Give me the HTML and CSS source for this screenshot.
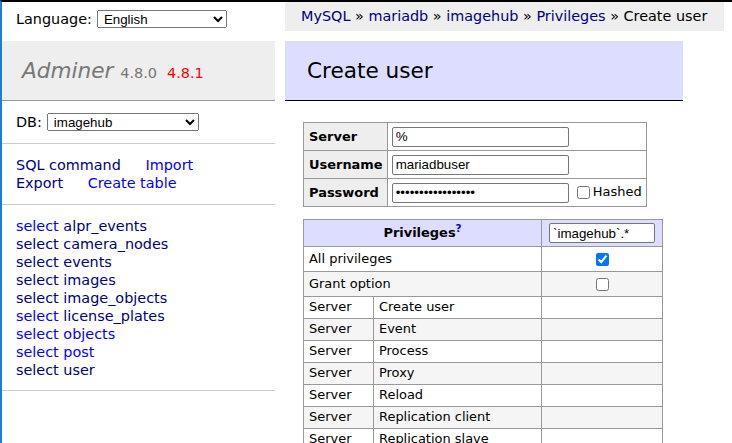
FILE: index.html
```html
<!DOCTYPE html>
<html lang="en">
<head>
<meta charset="utf-8">
<title>Create user - Adminer</title>
<link rel="stylesheet" href="styles.css">
</head>
<body>
<div class="page">
  <aside class="menu">
    <form class="lang">
      <span>Language:</span>
      <select class="lang-select"><option>English</option></select>
    </form>
    <h1 class="brand"><a class="brand-name" href="#">Adminer</a> <span class="version">4.8.0</span> <a class="new-version" href="#">4.8.1</a></h1>
    <form class="dbs">
      <span>DB:</span>
      <select class="db-select"><option>imagehub</option></select>
    </form>
    <p class="links">
      <a class="visited gap" href="#">SQL command</a> <a class="gap" href="#">Import</a><br>
      <a class="visited gap" href="#">Export</a> <a class="gap" href="#">Create table</a>
    </p>
    <ul class="tables">
      <li><a href="#">select</a> <a class="visited" href="#">alpr_events</a></li>
      <li><a class="visited" href="#">select</a> <a class="visited" href="#">camera_nodes</a></li>
      <li><a class="visited" href="#">select</a> <a class="visited" href="#">events</a></li>
      <li><a class="visited" href="#">select</a> <a class="visited" href="#">images</a></li>
      <li><a class="visited" href="#">select</a> <a class="visited" href="#">image_objects</a></li>
      <li><a href="#">select</a> <a class="visited" href="#">license_plates</a></li>
      <li><a href="#">select</a> <a href="#">objects</a></li>
      <li><a href="#">select</a> <a href="#">post</a></li>
      <li><a class="visited" href="#">select</a> <a class="visited" href="#">user</a></li>
    </ul>
  </aside>

  <main class="content">
    <nav class="breadcrumb">
      <a href="#">MySQL</a> » <a href="#">mariadb</a> » <a href="#">imagehub</a> » <a href="#">Privileges</a> » Create user
    </nav>
    <h2 class="title">Create user</h2>

    <form class="user-form">
      <table class="grid user-table">
        <tbody>
          <tr><th>Server</th><td><input class="text-in" type="text" value="%"></td></tr>
          <tr><th>Username</th><td><input class="text-in" type="text" value="mariadbuser"></td></tr>
          <tr><th>Password</th><td><input class="text-in" type="password" value="xxxxxxxxxxxxxxxxx"> <label class="hashed"><input class="check" type="checkbox">Hashed</label></td></tr>
        </tbody>
      </table>

      <table class="grid priv-table">
        <colgroup><col class="c1"><col class="c2"><col class="c3"></colgroup>
        <thead>
          <tr><th colspan="2" class="priv-head">Privileges<sup><a class="help" href="#">?</a></sup></th><td class="scope-cell"><input class="scope-in" type="text" value="`imagehub`.*"></td></tr>
        </thead>
        <tbody>
          <tr class="check-row"><td colspan="2">All privileges</td><td class="center"><input class="check-block" type="checkbox" checked></td></tr>
          <tr class="check-row"><td colspan="2">Grant option</td><td class="center"><input class="check-block" type="checkbox"></td></tr>
          <tr><td>Server</td><td>Create user</td><td></td></tr>
          <tr><td>Server</td><td>Event</td><td></td></tr>
          <tr><td>Server</td><td>Process</td><td></td></tr>
          <tr><td>Server</td><td>Proxy</td><td></td></tr>
          <tr><td>Server</td><td>Reload</td><td></td></tr>
          <tr><td>Server</td><td>Replication client</td><td></td></tr>
          <tr><td>Server</td><td>Replication slave</td><td></td></tr>
        </tbody>
      </table>
    </form>
  </main>
</div>
</body>
</html>
```

FILE: styles.css
```css
html, body {
  margin: 0;
  padding: 0;
}

body {
  font: 14.4px/18px "DejaVu Sans", Verdana, sans-serif;
  color: #000;
  background: #fff;
  border-top: 2px solid #000;
  border-left: 2px solid #1a7fd6;
  min-height: 100vh;
  box-sizing: border-box;
  overflow: hidden;
}

a {
  color: #00f;
  text-decoration: none;
}

a.visited {
  color: #000080;
}

.page {
  display: grid;
  grid-template-columns: 273px 1fr;
  column-gap: 10px;
  align-items: start;
}

/* ---------- sidebar ---------- */
.lang {
  display: flex;
  align-items: flex-start;
  gap: 5px;
  height: 39px;
  box-sizing: border-box;
  padding: 8px 14px 0;
  margin: 0;
}

.lang span, .dbs span {
  line-height: 18px;
}

select {
  font: 13.33px "Liberation Sans", Arial, sans-serif;
  color: #000;
  height: 18px;
  box-sizing: border-box;
  padding: 0 2px;
  margin: 0;
}

.lang-select {
  width: 130px;
}

.db-select {
  width: 152px;
}

.brand {
  margin: 0;
  padding: 16px 20px;
  height: 60px;
  box-sizing: border-box;
  line-height: 27px;
  font-size: 21.6px;
  font-weight: normal;
  font-style: italic;
  background: #eee;
  border-bottom: 1px solid #999;
  color: #777;
  white-space: nowrap;
  overflow: hidden;
}

.brand-name {
  color: #777;
}

.version {
  font-size: 67%;
  line-height: 10px;
  font-style: normal;
  color: #777;
}

.new-version {
  font-size: 67%;
  line-height: 10px;
  font-style: normal;
  color: #f00;
  margin-left: 3px;
}

.dbs {
  display: flex;
  align-items: center;
  gap: 5px;
  margin: 0;
  padding: 12px 14px;
  border-bottom: 1px solid #ccc;
}

.links {
  margin: 0;
  padding: 12px 14px;
  border-bottom: 1px solid #ccc;
  white-space: nowrap;
}

.links .gap {
  margin-right: 20px;
}

.tables {
  list-style: none;
  margin: 0;
  padding: 12px 14px 11px;
  border-bottom: 1px solid #ccc;
  white-space: nowrap;
}

/* ---------- content ---------- */
.content {
  min-width: 0;
}

.breadcrumb {
  display: inline-block;
  background: #eee;
  line-height: 29px;
  height: 29px;
  padding: 0 17px 0 16px;
  white-space: nowrap;
  vertical-align: top;
}

.breadcrumb a {
  color: #000080;
}

.title {
  width: 398px;
  box-sizing: border-box;
  margin: 10px 0 21px;
  padding: 16px 22px;
  line-height: 27px;
  font-size: 21.6px;
  font-weight: normal;
  background: #ddf;
  border-bottom: 1px solid #000;
}

.user-form {
  margin: 0 0 0 18px;
}

.grid {
  border-collapse: collapse;
  font-size: 12.96px;
  line-height: 16px;
  margin: 0;
}

.user-table {
  margin-bottom: 12px;
}

.grid th, .grid td {
  border: 1px solid #999;
  padding: 3px 4px;
}

.user-table th {
  background: #eee;
  text-align: left;
  font-weight: bold;
  padding: 0 4px 0 5px;
  height: 27px;
  box-sizing: border-box;
}

.user-table td {
  padding: 0 4px 0 4px;
  height: 27px;
  line-height: 20px;
  white-space: nowrap;
}

.text-in {
  width: 177px;
  height: 20px;
  box-sizing: border-box;
  font: 13.33px "Liberation Sans", Arial, sans-serif;
  padding: 0 3px;
  border: 1px solid #767676;
  border-radius: 2px;
  vertical-align: middle;
  margin: 0;
}

.hashed {
  white-space: nowrap;
}

.check {
  width: 13px;
  height: 13px;
  margin: 0 3px 0 4px;
  vertical-align: middle;
}

.c1 { width: 70px; }
.c2 { width: 168px; }
.c3 { width: 121px; }

.priv-table {
  table-layout: fixed;
  width: 359px;
}

.priv-table td {
  padding: 2px 5px 3px;
  line-height: 16px;
  white-space: nowrap;
}

.priv-table thead th, .priv-table thead td {
  background: #ddf;
  height: 27px;
  box-sizing: border-box;
  padding: 0 4px;
  text-align: center;
}

.priv-head {
  font-weight: bold;
}

.priv-head sup {
  font-size: 80%;
  line-height: 0;
}

.help {
  color: #00f;
  font-weight: bold;
}

.scope-in {
  width: 106px;
  height: 20px;
  box-sizing: border-box;
  font: 13.33px "Liberation Sans", Arial, sans-serif;
  padding: 0 3px;
  border: 1px solid #767676;
  border-radius: 2px;
  margin: 0;
  vertical-align: middle;
}

.priv-table tbody tr:nth-child(even) {
  background: #f5f5f5;
}

.check-row td {
  height: 25px;
  box-sizing: border-box;
  padding-top: 0;
  padding-bottom: 0;
}

.center {
  text-align: center;
}

.check-block {
  display: block;
  width: 13px;
  height: 13px;
  margin: 0 auto;
}
```
